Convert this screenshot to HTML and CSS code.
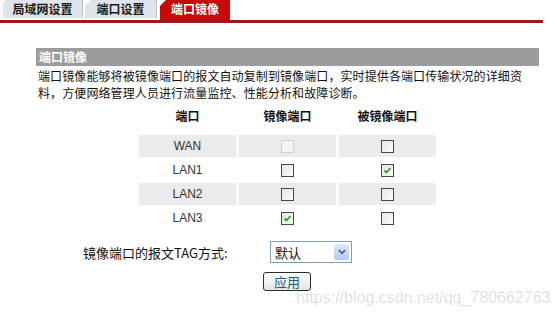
FILE: index.html
```html
<!DOCTYPE html>
<html lang="zh-CN">
<head>
    <meta charset="UTF-8">
    <title>端口镜像</title>
    <link rel="stylesheet" href="styles.css">
</head>
<body>
    <div class="tabs">
        <div class="tab tab-first">局域网设置</div>
        <div class="tab">端口设置</div>
        <div class="tab tab-active">端口镜像</div>
    </div>

    <div class="panel">
        <div class="panel-title">端口镜像</div>
        <p class="desc">端口镜像能够将被镜像端口的报文自动复制到镜像端口，实时提供各端口传输状况的详细资料，方便网络管理人员进行流量监控、性能分析和故障诊断。</p>

        <table class="ports">
            <tr class="head">
                <th>端口</th>
                <th>镜像端口</th>
                <th>被镜像端口</th>
            </tr>
            <tr class="shade">
                <td>WAN</td>
                <td><span class="cb disabled"></span></td>
                <td><span class="cb"></span></td>
            </tr>
            <tr>
                <td>LAN1</td>
                <td><span class="cb"></span></td>
                <td><span class="cb checked"><svg viewBox="0 0 11 11"><path d="M2.5 5.5 L4.5 7.5 L8.5 3"/></svg></span></td>
            </tr>
            <tr class="shade">
                <td>LAN2</td>
                <td><span class="cb"></span></td>
                <td><span class="cb"></span></td>
            </tr>
            <tr>
                <td>LAN3</td>
                <td><span class="cb checked"><svg viewBox="0 0 11 11"><path d="M2.5 5.5 L4.5 7.5 L8.5 3"/></svg></span></td>
                <td><span class="cb"></span></td>
            </tr>
        </table>

        <div class="tag-row">
            <span class="tag-label">镜像端口的报文TAG方式:</span>
            <div class="select">
                <span class="select-text">默认</span>
                <span class="select-arrow"><svg viewBox="0 0 9 6"><path d="M1 1 L4.5 4.5 L8 1"/></svg></span>
            </div>
        </div>

        <div class="actions">
            <button class="btn">应用</button>
        </div>
    </div>

    <div class="watermark">https://blog.csdn.net/qq_780662763</div>
</body>
</html>
```

FILE: styles.css
```css
body {
    margin: 0;
    background-color: #fff;
    color: #111;
    font-family: "Noto Sans CJK SC", "Liberation Sans", sans-serif;
    font-size: 12px;
    position: relative;
    height: 316px;
    overflow: hidden;
}

/* tabs */
.tabs {
    display: flex;
    align-items: flex-start;
    height: 20px;
    width: 540px;
    padding-left: 3px;
    border-bottom: 3px solid #9f1919;
}

.tab {
    width: 71px;
    height: 18px;
    line-height: 18px;
    margin-right: 2px;
    text-align: center;
    font-weight: bold;
    font-size: 12px;
    color: #1a1a1a;
    background-color: #dfe4ea;
    border-right: 1px solid #b9c0c8;
    clip-path: polygon(6px 0, 100% 0, 100% 100%, 0 100%, 0 6px);
}

.tab-first {
    width: 79px;
    clip-path: polygon(3px 0, 100% 0, 100% 100%, 0 100%, 0 3px);
}

.tab-active {
    width: 70px;
    height: 20px;
    margin-left: 1px;
    background-color: #c40a0a;
    color: #fff;
    border-right: none;
}

/* panel */
.panel {
    width: 503px;
    margin: 25px 0 0 36px;
}

.panel-title {
    height: 18px;
    line-height: 18px;
    padding-left: 3px;
    background-color: #9a9d9f;
    color: #fff;
    font-weight: bold;
}

.desc {
    width: 490px;
    margin: 1px 0 0 2px;
    line-height: 17px;
    letter-spacing: 0.1px;
}

/* ports table */
.ports {
    margin: 2px auto 0;
    border-spacing: 3px 2px;
}

.ports th {
    width: 97px;
    height: 28px;
    line-height: 22px;
    vertical-align: top;
    padding: 0;
    font-weight: bold;
    font-size: 12px;
}

.ports td {
    height: 22px;
    padding: 0;
    text-align: center;
    font-family: "Liberation Sans", sans-serif;
    font-size: 12px;
    color: #333;
}

.ports tr.shade td {
    background-color: #ebebeb;
}

.cb {
    display: inline-block;
    width: 11px;
    height: 11px;
    border: 1px solid #3e4a58;
    background: linear-gradient(135deg, #e4e4e0, #fbfbf9);
    vertical-align: middle;
}

.cb.disabled {
    border-color: #cfcfcf;
    background: #f4f4f4;
}

.cb svg {
    display: block;
    width: 11px;
    height: 11px;
}

.cb svg path {
    fill: none;
    stroke: #21a121;
    stroke-width: 1.8;
}

/* tag row */
.tag-row {
    display: flex;
    align-items: center;
    margin-top: 10px;
    padding-left: 47px;
}

.tag-label {
    width: 187px;
    font-size: 13px;
}

.select {
    display: flex;
    align-items: center;
    width: 80px;
    height: 20px;
    border: 1px solid #7f9db9;
    background-color: #fff;
}

.select-text {
    flex: 1;
    padding-left: 4px;
    font-size: 13px;
}

.select-arrow {
    width: 15px;
    height: 16px;
    margin-right: 2px;
    border-radius: 2px;
    background: linear-gradient(#dfe9fb, #b7c9ee);
    display: flex;
    align-items: center;
    justify-content: center;
}

.select-arrow svg {
    width: 8px;
    height: 6px;
}

.select-arrow svg path {
    fill: none;
    stroke: #4d6185;
    stroke-width: 2;
}

/* apply */
.actions {
    margin-top: 9px;
    padding-left: 227px;
}

.btn {
    width: 48px;
    height: 19px;
    padding: 0;
    border: 1px solid #2d2d2d;
    border-radius: 3px;
    background: linear-gradient(#ffffff, #e4e4e0);
    color: #1f5c8a;
    font-family: "Noto Sans CJK SC", sans-serif;
    font-size: 13px;
    line-height: 16px;
}

.watermark {
    position: absolute;
    left: 296px;
    top: 289px;
    font-family: "Liberation Sans", sans-serif;
    font-size: 16px;
    color: rgba(0, 0, 0, 0.14);
}
```
